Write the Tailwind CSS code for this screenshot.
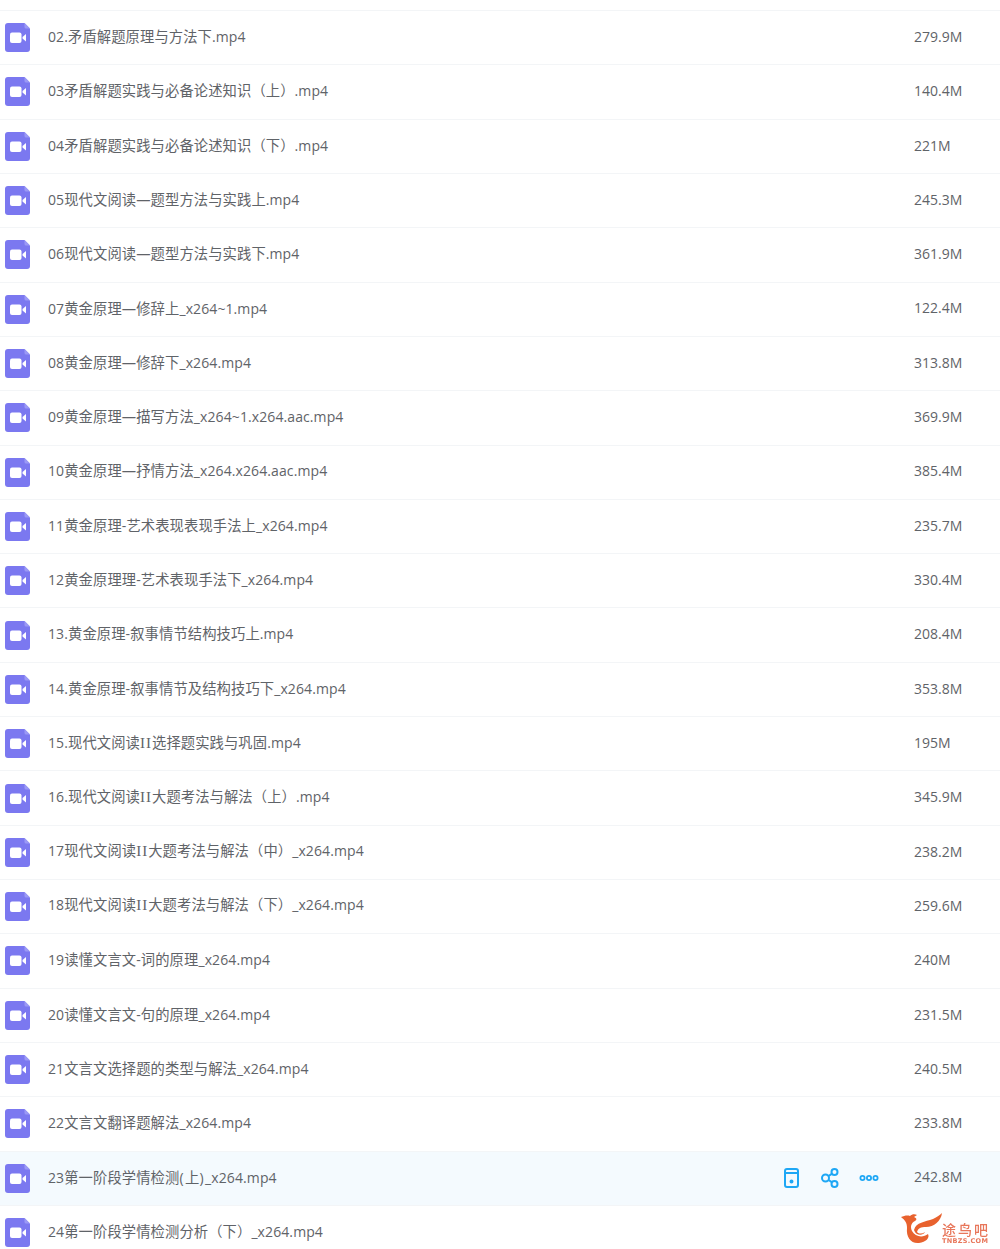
<!DOCTYPE html>
<html lang="zh"><head><meta charset="utf-8"><script src="https://cdn.jsdelivr.net/npm/@tailwindcss/browser@4"></script></head>
<body class="bg-white overflow-hidden">
<div id="list" class="h-[1249px] overflow-hidden pt-[10px] font-['Open_Sans','Noto_Sans_CJK_SC',sans-serif] text-sm text-[#5f6368]"></div>
<template id="row"><div class="flex h-[54.32px] items-center border-t border-[#f3f5f7] pl-[5px]">
<svg class="h-[29px] w-[25px] shrink-0" viewBox="0 0 25 29"><path d="M3 0H19.500L25 5.500V26a3 3 0 0 1-3 3H3a3 3 0 0 1-3-3V3a3 3 0 0 1 3-3Z" fill="#7b78f0"/><path d="M19.500 0L25 5.500H21a1.500 1.500 0 0 1-1.500-1.500Z" fill="#9b99f5"/><rect x="5" y="9.500" width="11.500" height="10.500" rx="2" fill="#fff"/><path d="M17.500 14L21 11V18.500L17.500 15.500Z" fill="#fff"/></svg>
<span class="name ml-[18px] mb-[1px] flex-1 whitespace-pre tracking-[0.1px]"></span>
<span class="actions hidden mr-[30px] items-center"></span>
<span class="size w-[86px] shrink-0 mb-[1.500px]"></span></div></template>
<script>
const d=[["02.矛盾解题原理与方法下.mp4","279.9M"],["03矛盾解题实践与必备论述知识（上）.mp4","140.4M"],["04矛盾解题实践与必备论述知识（下）.mp4","221M"],["05现代文阅读—题型方法与实践上.mp4","245.3M"],["06现代文阅读—题型方法与实践下.mp4","361.9M"],["07黄金原理—修辞上_x264~1.mp4","122.4M"],["08黄金原理—修辞下_x264.mp4","313.8M"],["09黄金原理—描写方法_x264~1.x264.aac.mp4","369.9M"],["10黄金原理—抒情方法_x264.x264.aac.mp4","385.4M"],["11黄金原理-艺术表现表现手法上_x264.mp4","235.7M"],["12黄金原理理-艺术表现手法下_x264.mp4","330.4M"],["13.黄金原理-叙事情节结构技巧上.mp4","208.4M"],["14.黄金原理-叙事情节及结构技巧下_x264.mp4","353.8M"],["15.现代文阅读II选择题实践与巩固.mp4","195M"],["16.现代文阅读II大题考法与解法（上）.mp4","345.9M"],["17现代文阅读II大题考法与解法（中）_x264.mp4","238.2M"],["18现代文阅读II大题考法与解法（下）_x264.mp4","259.6M"],["19读懂文言文-词的原理_x264.mp4","240M"],["20读懂文言文-句的原理_x264.mp4","231.5M"],["21文言文选择题的类型与解法_x264.mp4","240.5M"],["22文言文翻译题解法_x264.mp4","233.8M"],["23第一阶段学情检测(上)_x264.mp4","242.8M"],["24第一阶段学情检测分析（下）_x264.mp4",""]];
const t=document.getElementById('row'),l=document.getElementById('list');
const fmt=s=>s.replace(/[\u2014\u4e00-\u9fff\uff08\uff09]+/g,m=>`<span class="text-[14.3px]">${m}</span>`).replace(/II/g,`<span class="font-['Liberation_Serif'] text-[15px] tracking-[1px]">II</span>`).replace(/[()]/g,m=>`<span class="tracking-[1.500px]">${m}</span>`);
d.forEach((r,i)=>{const n=t.content.cloneNode(true),e=n.firstElementChild;e.querySelector('.name').innerHTML=fmt(r[0]);e.querySelector('.size').textContent=r[1];
if(i==21){e.classList.add('bg-[#f4fafe]');const a=e.querySelector('.actions');a.classList.remove('hidden');a.classList.add('flex');a.innerHTML='<svg width="100" height="22" viewBox="0 0 100 22" fill="none" stroke="#1ea7f5" stroke-width="2"><rect x="1" y="2" width="13" height="18" rx="2"/><path d="M1 6H14"/><circle cx="7.500" cy="14.500" r="1" fill="#1ea7f5"/><circle cx="41.500" cy="11" r="3.500"/><circle cx="50.500" cy="5" r="3"/><circle cx="50.500" cy="17" r="3"/><path d="M44.500 9L47.800 6.800M44.500 13L47.800 15.200"/><g stroke-width="1.800"><circle cx="78.500" cy="11" r="2.100"/><circle cx="85" cy="11" r="2.100"/><circle cx="91.500" cy="11" r="2.100"/></g></svg>'}
l.appendChild(n)});
</script>
<div class="fixed right-[9px] bottom-[5px] flex items-end"><svg width="41" height="31" viewBox="0 0 41 31" fill="none"><path d="M0 4C3 3 6 2 9 3C11 1 14 1 16 2L13 4C16 5 16 7 14 8C10 10 9 14 11 18C14 24 22 25 27 21C29 25 25 29 18 30C10 31 5 24 6 15C6 10 4 7 0 4Z" fill="#e8622e"/><path d="M13 17C15 9 24 9 32 6C36 4 39 2 41 0C40 8 33 14 25 14C20 14 17 15 16 19C18 21 21 21 24 19C22 23 15 23 13 17Z" fill="#e8622e"/></svg><div class="w-[49px] text-[#e8765a]"><div class="text-[14px] leading-[14px] tracking-[2px] font-medium font-['Noto_Sans_CJK_SC']">途鸟吧</div><div class="mt-[2px] text-[6.500px] leading-[6px] font-bold tracking-[0.3px] whitespace-nowrap font-['DejaVu_Sans']">TNBZS.COM</div></div></div>
</body></html>
